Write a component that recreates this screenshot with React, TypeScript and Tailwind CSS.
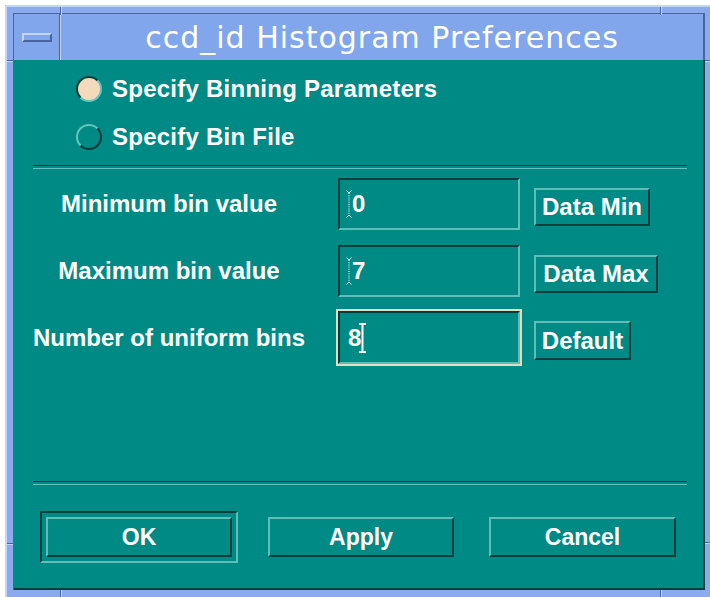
const teal = "bg-[#008a86]";

function Notch({ className }: { className: string }) {
  return <div className={`absolute ${className}`} />;
}

function Radio({ checked }: { checked?: boolean }) {
  return (
    <span
      className={`block w-[26px] h-[26px] rounded-full border-2 ${
        checked
          ? "bg-[#f5d9bb] border-t-[#003c39] border-l-[#003c39] border-b-[#66c4be] border-r-[#66c4be]"
          : "border-t-[#66c4be] border-l-[#66c4be] border-b-[#003c39] border-r-[#003c39]"
      }`}
    />
  );
}

function DottedCursor() {
  return (
    <svg width="6" height="28" viewBox="0 0 6 28" className="shrink-0">
      <path d="M0.5 0.5 L3 3 L5.5 0.5" stroke="#e6f2f1" strokeWidth="1" fill="none" />
      <line x1="3" y1="3" x2="3" y2="25" stroke="#e6f2f1" strokeWidth="1.2" strokeDasharray="1 1.2" />
      <path d="M0.5 27.5 L3 25 L5.5 27.5" stroke="#e6f2f1" strokeWidth="1" fill="none" />
    </svg>
  );
}

function IBeam() {
  return (
    <svg width="9" height="30" viewBox="0 0 9 30" className="shrink-0">
      <path d="M1 1 H8 M4.5 1 V29 M1 29 H8" stroke="#ffffff" strokeWidth="2" fill="none" />
    </svg>
  );
}

function Field({ value, focused }: { value: string; focused?: boolean }) {
  return (
    <div
      className={`flex items-center w-[182px] border-2 border-t-[#003f3c] border-l-[#003f3c] border-b-[#5fbeb8] border-r-[#5fbeb8] text-[24px] font-bold text-white ${
        focused ? "h-[53px] pl-[8px] ring-2 ring-[#e4dcc0]" : "h-[52px] pl-[6px]"
      }`}
    >
      {focused ? (
        <>
          <span>{value}</span>
          <span className="-ml-[3px]">
            <IBeam />
          </span>
        </>
      ) : (
        <>
          <DottedCursor />
          <span>{value}</span>
        </>
      )}
    </div>
  );
}

function RaisedButton({ label, className = "" }: { label: string; className?: string }) {
  return (
    <button
      className={`flex items-center justify-center border-2 border-t-[#5fbeb8] border-l-[#5fbeb8] border-b-[#003f3c] border-r-[#003f3c] font-bold text-white ${className}`}
    >
      {label}
    </button>
  );
}

function Separator({ className = "" }: { className?: string }) {
  return <div className={`h-[4px] border-t border-b border-t-[#003f3c] border-b-[#63c2bc] ${className}`} />;
}

const rows = [
  { label: "Minimum bin value", value: "0", button: "Data Min", width: "w-[116px] h-[38px]" },
  { label: "Maximum bin value", value: "7", button: "Data Max", width: "w-[124px] h-[38px]" },
  { label: "Number of uniform bins", value: "8", button: "Default", width: "w-[97px] h-[39px]", focused: true },
];

export default function App() {
  return (
    <div className="w-[710px] h-[597px] overflow-hidden bg-white pl-[5px] pt-[5px] font-['Liberation_Sans',Arial,sans-serif]">
      {/* window manager frame */}
      <div className="relative w-[720px] h-[600px] bg-[#8cabee] border-t-2 border-l-2 border-[#c4d5f8] pl-[6px] pt-[6px]">
        <Notch className="left-[53px] top-0 w-[2px] h-[8px] border-l border-r border-l-[#4a64a0] border-r-[#c4d5f8]" />
        <Notch className="left-[653px] top-0 w-[2px] h-[8px] border-l border-r border-l-[#4a64a0] border-r-[#c4d5f8]" />
        <Notch className="left-0 top-[53px] w-[6px] h-[2px] border-t border-b border-t-[#4a64a0] border-b-[#c4d5f8]" />
        <Notch className="left-0 top-[536px] w-[6px] h-[2px] border-t border-b border-t-[#4a64a0] border-b-[#c4d5f8]" />
        <Notch className="left-[698px] top-[53px] w-[8px] h-[2px] border-t border-b border-t-[#4a64a0] border-b-[#c4d5f8]" />
        <Notch className="left-[698px] top-[535px] w-[8px] h-[2px] border-t border-b border-t-[#4a64a0] border-b-[#c4d5f8]" />
        <Notch className="left-[53px] top-[583px] w-[2px] h-[10px] border-l border-r border-l-[#4a64a0] border-r-[#c4d5f8]" />
        <Notch className="left-[653px] top-[583px] w-[2px] h-[10px] border-l border-r border-l-[#4a64a0] border-r-[#c4d5f8]" />

        <div className="flex flex-col w-[692px] h-[577px] border-l border-t border-[#4a64a0]">
          {/* title bar */}
          <div className="flex h-[46px] shrink-0 bg-[#82a6ec]">
            <div className="flex items-center justify-center w-[46px] border-r border-[#4a64a0]">
              <div className="w-[30px] h-[9px] border-2 border-t-[#c4d5f8] border-l-[#c4d5f8] border-b-[#4a64a0] border-r-[#4a64a0]" />
            </div>
            <div className="flex flex-1 items-center justify-center border-l border-l-[#c4d5f8] border-r-2 border-r-[#4a64a0] font-['DejaVu_Sans',sans-serif] text-[30px] text-white tracking-[1px]">
              ccd_id Histogram Preferences
            </div>
          </div>

          {/* dialog body */}
          <div className={`flex flex-1 flex-col ${teal} border-r-2 border-b-2 border-[#003f3c] text-white`}>
            <div className="flex flex-col pt-[5px]">
              <label className="flex items-center h-[48px] pl-[62px] gap-[10px] text-[24px] font-bold tracking-[0.25px]">
                <Radio checked />
                Specify Binning Parameters
              </label>
              <label className="flex items-center h-[48px] pl-[62px] gap-[10px] text-[24px] font-bold tracking-[0.25px]">
                <Radio />
                Specify Bin File
              </label>
            </div>

            <Separator className="mt-[4px] ml-[19px] w-[654px]" />

            <div className="flex flex-col mt-[1px]">
              {rows.map((row) => (
                <div key={row.label} className="grid grid-cols-[310px_182px_auto] gap-x-[14px] items-center h-[67px]">
                  <span className="text-center text-[24px] font-bold">{row.label}</span>
                  <Field value={row.value} focused={row.focused} />
                  <RaisedButton label={row.button} className={`mt-[6px] text-[24px] ${row.width}`} />
                </div>
              ))}
            </div>

            <div className="mt-auto flex flex-col">
              <Separator className="ml-[19px] w-[654px]" />
              <div className="flex items-center mt-[26px] mb-[25px] pl-[26px]">
                <div className="p-[4px] border-2 border-t-[#003f3c] border-l-[#003f3c] border-b-[#5fbeb8] border-r-[#5fbeb8]">
                  <RaisedButton label="OK" className="w-[186px] h-[40px] text-[23px]" />
                </div>
                <RaisedButton label="Apply" className="ml-[30px] w-[186px] h-[40px] text-[23px]" />
                <RaisedButton label="Cancel" className="ml-[35px] w-[187px] h-[40px] text-[23px]" />
              </div>
            </div>
          </div>
        </div>
      </div>
    </div>
  );
}
